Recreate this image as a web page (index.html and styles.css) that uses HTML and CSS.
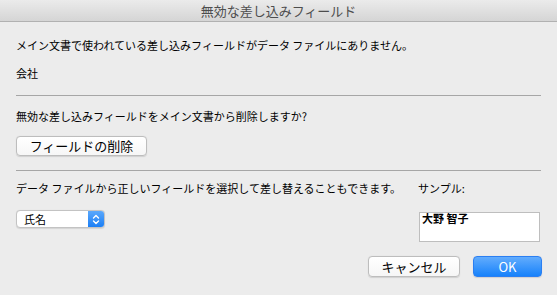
FILE: index.html
```html
<!DOCTYPE html>
<html lang="ja">
<head>
<meta charset="utf-8">
<link rel="stylesheet" href="styles.css">
</head>
<body>
<div class="window">
  <div class="titlebar">無効な差し込みフィールド</div>
  <div class="content">
    <p class="line first">メイン文書で使われている差し込みフィールドがデータ ファイルにありません。</p>
    <p class="line field">会社</p>
    <div class="divider d1"></div>
    <p class="line q">無効な差し込みフィールドをメイン文書から削除しますか?</p>
    <button class="btn del">フィールドの削除</button>
    <div class="divider d2"></div>
    <div class="replace">
      <p class="line">データ ファイルから正しいフィールドを選択して差し替えることもできます。</p>
      <p class="line">サンプル:</p>
      <div class="select">
        <span class="select-label">氏名</span>
        <span class="select-arrows">
          <svg width="8" height="11" viewBox="0 0 8 11"><path d="M1.5 4 L4 1.5 L6.5 4 M1.5 7 L4 9.5 L6.5 7" fill="none" stroke="#fff" stroke-width="1.4" stroke-linecap="round" stroke-linejoin="round"/></svg>
        </span>
      </div>
      <div class="sample">大野 智子</div>
    </div>
    <div class="actions">
      <button class="btn cancel">キャンセル</button>
      <button class="btn ok">OK</button>
    </div>
  </div>
</div>
</body>
</html>
```
FILE: styles.css
```css
* { box-sizing: border-box; }
html, body { margin: 0; padding: 0; }
body {
  width: 557px;
  height: 295px;
  background: #ececec;
  font-family: "Noto Sans CJK JP", sans-serif;
  font-size: 11px;
  color: #000;
  overflow: hidden;
}
.titlebar {
  height: 22px;
  line-height: 21px;
  text-align: center;
  font-size: 13px;
  color: #4d4d4d;
  background: linear-gradient(#ebebeb, #d5d5d5);
  border-bottom: 1px solid #b1b1b1;
}
.content {
  padding: 0 16px;
  display: flex;
  flex-direction: column;
}
.line {
  margin: 0;
  line-height: 14px;
  height: 14px;
  white-space: nowrap;
}
.first { margin-top: 16px; }
.field { margin-top: 14px; }
.divider {
  height: 1px;
  background: #a6a6a6;
}
.d1 { margin-top: 15px; }
.q { margin-top: 13px; }
.btn {
  font-family: "Noto Sans CJK JP", sans-serif;
  font-size: 13px;
  height: 21px;
  padding: 0;
  line-height: 19px;
  border-radius: 4px;
  border: 1px solid #bdbdbd;
  background: linear-gradient(#ffffff, #f6f6f6);
  box-shadow: 0 0.5px 1px rgba(0,0,0,0.12);
  color: #000;
}
.del {
  margin-top: 13px;
  width: 131px;
  align-self: flex-start;
  height: 20px;
  line-height: 18px;
}
.d2 { margin-top: 14px; }
.replace {
  margin-top: 10px;
  display: grid;
  grid-template-columns: 402px 122px;
  grid-template-rows: 14px auto;
  row-gap: 15px;
}
.select {
  width: 89px;
  height: 18px;
  display: flex;
  border: 1px solid #c3c3c3;
  border-radius: 4px;
  background: #fff;
  overflow: hidden;
  box-shadow: 0 0.5px 1px rgba(0,0,0,0.1);
}
.select-label {
  flex: 1;
  padding-left: 7px;
  line-height: 16px;
}
.select-arrows {
  width: 16px;
  display: flex;
  align-items: center;
  justify-content: center;
  background: linear-gradient(#5aa8fc, #1c7ff5);
}
.sample {
  margin-top: 2px;
  margin-left: 1px;
  width: 121px;
  height: 30px;
  border: 1px solid #bebebe;
  background: #fff;
  font-weight: bold;
  padding: 0 0 0 2px;
  line-height: 11px;
}
.actions {
  margin-top: 14px;
  display: flex;
  justify-content: flex-end;
  gap: 13px;
  margin-right: -1px;
}
.cancel { width: 92px; }
.ok {
  width: 69px;
  color: #fff;
  border: 1px solid #2b7ff2;
  background: linear-gradient(#62acfd, #1782fb);
}
```
